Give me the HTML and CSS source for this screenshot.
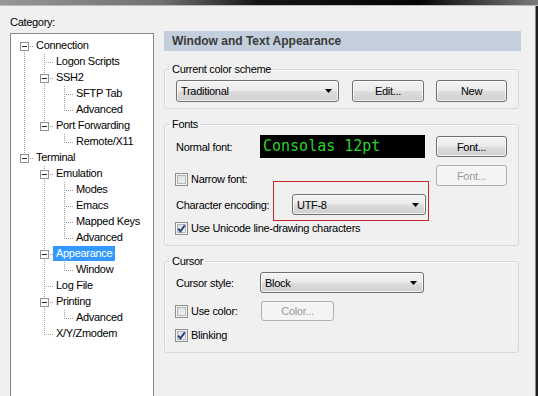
FILE: index.html
```html
<!DOCTYPE html>
<html lang="en">
<head>
    <meta charset="UTF-8">
    <meta name="viewport" content="width=device-width, initial-scale=1.0">
    <title>Session Options</title>
    <link rel="stylesheet" href="styles.css">
</head>
<body>
    <div class="titlebar"></div>
    <div class="dialog">
        <div class="side">
            <div class="caption">Category:</div>
            <div class="tree">
                <div class="row"><span class="cell first"><span class="box"></span></span><span class="name">Connection</span></div>
                <div class="row"><span class="cell pipe"></span><span class="cell tee"></span><span class="name">Logon Scripts</span></div>
                <div class="row"><span class="cell pipe"></span><span class="cell tee"><span class="box"></span></span><span class="name">SSH2</span></div>
                <div class="row"><span class="cell pipe"></span><span class="cell pipe"></span><span class="cell tee"></span><span class="name">SFTP Tab</span></div>
                <div class="row"><span class="cell pipe"></span><span class="cell pipe"></span><span class="cell elbow"></span><span class="name">Advanced</span></div>
                <div class="row"><span class="cell pipe"></span><span class="cell elbow"><span class="box"></span></span><span class="name">Port Forwarding</span></div>
                <div class="row"><span class="cell pipe"></span><span class="cell"></span><span class="cell elbow"></span><span class="name">Remote/X11</span></div>
                <div class="row"><span class="cell elbow"><span class="box"></span></span><span class="name">Terminal</span></div>
                <div class="row"><span class="cell"></span><span class="cell tee"><span class="box"></span></span><span class="name">Emulation</span></div>
                <div class="row"><span class="cell"></span><span class="cell pipe"></span><span class="cell tee"></span><span class="name">Modes</span></div>
                <div class="row"><span class="cell"></span><span class="cell pipe"></span><span class="cell tee"></span><span class="name">Emacs</span></div>
                <div class="row"><span class="cell"></span><span class="cell pipe"></span><span class="cell tee"></span><span class="name">Mapped Keys</span></div>
                <div class="row"><span class="cell"></span><span class="cell pipe"></span><span class="cell elbow"></span><span class="name">Advanced</span></div>
                <div class="row"><span class="cell"></span><span class="cell tee"><span class="box"></span></span><span class="name selected">Appearance</span></div>
                <div class="row"><span class="cell"></span><span class="cell pipe"></span><span class="cell elbow"></span><span class="name">Window</span></div>
                <div class="row"><span class="cell"></span><span class="cell tee"></span><span class="name">Log File</span></div>
                <div class="row"><span class="cell"></span><span class="cell tee"><span class="box"></span></span><span class="name">Printing</span></div>
                <div class="row"><span class="cell"></span><span class="cell pipe"></span><span class="cell elbow"></span><span class="name">Advanced</span></div>
                <div class="row"><span class="cell"></span><span class="cell elbow"></span><span class="name">X/Y/Zmodem</span></div>
            </div>
        </div>

        <div class="page">
            <div class="heading">Window and Text Appearance</div>

            <fieldset class="group scheme-group">
                <legend>Current color scheme</legend>
                <div class="line scheme-line">
                    <div class="combo scheme">
                        <span>Traditional</span>
                        <svg class="arrow" width="7" height="4" viewBox="0 0 7 4"><path d="M0 0h7L3.5 4z"/></svg>
                    </div>
                    <button class="btn edit">Edit...</button>
                    <button class="btn new">New</button>
                </div>
            </fieldset>

            <fieldset class="group fonts-group">
                <legend>Fonts</legend>
                <div class="line normal-line">
                    <span class="label">Normal font:</span>
                    <div class="console">Consolas 12pt</div>
                    <button class="btn side-btn">Font...</button>
                </div>
                <div class="line narrow-line">
                    <label class="check-item low">
                        <span class="check"></span>
                        <span>Narrow font:</span>
                    </label>
                    <button class="btn side-btn" disabled>Font...</button>
                </div>
                <div class="line encoding-line">
                    <span class="label wide-label">Character encoding:</span>
                    <div class="combo encoding marked">
                        <span>UTF-8</span>
                        <svg class="arrow" width="7" height="4" viewBox="0 0 7 4"><path d="M0 0h7L3.5 4z"/></svg>
                    </div>
                </div>
                <div class="line unicode-line">
                    <label class="check-item">
                        <span class="check on"><svg width="11" height="11" viewBox="0 0 11 11"><path d="M2.2 5.6 4.4 8.4 8.8 2.4"/></svg></span>
                        <span>Use Unicode line-drawing characters</span>
                    </label>
                </div>
            </fieldset>

            <fieldset class="group cursor-group">
                <legend>Cursor</legend>
                <div class="line style-line">
                    <span class="label">Cursor style:</span>
                    <div class="combo cursor">
                        <span>Block</span>
                        <svg class="arrow" width="7" height="4" viewBox="0 0 7 4"><path d="M0 0h7L3.5 4z"/></svg>
                    </div>
                </div>
                <div class="line color-line">
                    <label class="check-item wide">
                        <span class="check"></span>
                        <span>Use color:</span>
                    </label>
                    <button class="btn color-btn" disabled>Color...</button>
                </div>
                <div class="line blink-line">
                    <label class="check-item">
                        <span class="check on"><svg width="11" height="11" viewBox="0 0 11 11"><path d="M2.2 5.6 4.4 8.4 8.8 2.4"/></svg></span>
                        <span>Blinking</span>
                    </label>
                </div>
            </fieldset>
        </div>
    </div>
</body>
</html>
```

FILE: styles.css
```css
html, body {
    height: 100%;
}
body {
    margin: 0;
    overflow: hidden;
    background-color: #1e1e1e;
    font-family: "Liberation Sans", Arial, sans-serif;
    font-size: 11px;
    letter-spacing: -0.3px;
    color: #000;
    --dots-v: repeating-linear-gradient(#a0a0a0 0 1px, transparent 1px 2px);
    --dots-h: repeating-linear-gradient(to right, #a0a0a0 0 1px, transparent 1px 2px);
}
.titlebar {
    height: 5px;
    background: linear-gradient(to right, #979797 0%, #707070 30%, #151515 48%, #060606 78%, #7a7a7a 100%);
    border-bottom: 1px solid #bcbcbc;
}
.dialog {
    display: flex;
    height: 390px;
    margin-right: 2px;
    background-color: #f0f0f0;
    border-right: 1px solid #8c8c8c;
}

/* category tree */
.side {
    width: 154px;
    flex: none;
    padding-left: 10px;
    box-sizing: border-box;
}
.caption {
    margin-top: 9px;
    line-height: 14px;
}
.tree {
    width: 144px;
    height: 364px;
    margin-top: 4px;
    padding: 4px 0 0 3px;
    box-sizing: border-box;
    background: #fff;
    border: 1px solid #828790;
}
.row {
    display: flex;
    align-items: flex-start;
    height: 16px;
}
.cell {
    display: block;
    width: 20px;
    height: 16px;
    flex: none;
}
.pipe {
    background: var(--dots-v) 10px 0 / 1px 16px no-repeat;
}
.tee {
    background: var(--dots-h) 12px 8px / 8px 1px no-repeat,
                var(--dots-v) 10px 0 / 1px 16px no-repeat;
}
.elbow {
    background: var(--dots-h) 12px 8px / 8px 1px no-repeat,
                var(--dots-v) 10px 0 / 1px 9px no-repeat;
}
.first {
    background: var(--dots-h) 12px 8px / 8px 1px no-repeat,
                var(--dots-v) 10px 8px / 1px 8px no-repeat;
}
.box {
    display: block;
    width: 9px;
    height: 9px;
    margin: 4px 0 0 6px;
    box-sizing: border-box;
    border: 1px solid #919191;
    background: linear-gradient(#2b2b2b, #2b2b2b) center / 5px 1px no-repeat, #fff;
}
.name {
    padding: 0 2px;
    line-height: 15px;
    white-space: nowrap;
}
.name.selected {
    margin-left: -1px;
    padding: 0 3px;
    background: #3399ff;
    color: #fff;
}

/* right page */
.page {
    width: 357px;
    margin-left: 10px;
    padding-top: 25px;
}
.heading {
    height: 20px;
    line-height: 20px;
    padding-left: 8px;
    background: #c3cfdc;
    color: #3a3a3a;
    font-weight: bold;
    font-size: 12px;
    letter-spacing: 0;
}
.group {
    margin: 8px 2px 0 0;
    padding: 4px 11px 10px;
    min-width: 0;
    border: 1px solid #d5d9dd;
    border-radius: 3px;
    box-shadow: inset 1px 1px 0 #fbfbfb;
}
.group legend {
    margin-left: -6px;
    padding: 0 2px;
    line-height: 14px;
}
.scheme-group {
    margin-top: 11px;
    padding-bottom: 6px;
}
.line {
    display: flex;
    align-items: center;
}
.label {
    width: 84px;
    flex: none;
    line-height: 14px;
}
.wide-label {
    width: 116px;
}

.combo,
.btn {
    box-sizing: border-box;
    border: 1px solid #707070;
    border-radius: 3px;
    background: linear-gradient(#f3f3f3 0%, #ebebeb 48%, #dddddd 52%, #cfcfcf 100%);
    box-shadow: inset 0 0 0 1px rgba(255, 255, 255, 0.7);
    font-family: inherit;
    font-size: 11px;
    letter-spacing: -0.3px;
    color: #000;
}
.combo {
    display: flex;
    align-items: center;
    justify-content: space-between;
    height: 21px;
    padding: 0 6px 0 4px;
}
.arrow {
    display: block;
}
.btn {
    width: 71px;
    height: 21px;
    padding: 0;
    text-align: center;
}
.btn:disabled {
    border-color: #adb2b5;
    background: #f4f4f4;
    box-shadow: none;
    color: #9a9a9a;
}

.scheme {
    width: 163px;
    height: 22px;
}
.edit {
    width: 72px;
    height: 22px;
    margin-left: 13px;
}
.new {
    height: 22px;
    margin-left: 12px;
}

.normal-line {
    height: 23px;
}
.console {
    width: 165px;
    height: 23px;
    padding-left: 3px;
    box-sizing: border-box;
    background: #000;
    color: #2bd12b;
    font-family: "DejaVu Sans Mono", "Liberation Mono", monospace;
    font-size: 15px;
    line-height: 23px;
    letter-spacing: 0;
}
.side-btn {
    margin-left: auto;
}
.narrow-line {
    height: 21px;
    margin-top: 7px;
}
.low {
    align-self: flex-end;
}
.encoding-line {
    height: 21px;
    margin-top: 8px;
}
.encoding {
    width: 134px;
}
.marked {
    position: relative;
}
.marked::after {
    content: "";
    position: absolute;
    left: -20px;
    top: -14px;
    right: -4px;
    bottom: -7px;
    border: 1px solid #c8262b;
}
.unicode-line {
    margin-top: 6px;
}

.check-item {
    display: flex;
    align-items: center;
    gap: 3px;
    margin-left: -1px;
    line-height: 14px;
}
.check-item.wide {
    width: 86px;
    flex: none;
}
.check {
    width: 13px;
    height: 13px;
    flex: none;
    box-sizing: border-box;
    border: 1px solid #8e8f8f;
    background: linear-gradient(135deg, #d3d6da, #fbfbfb);
    box-shadow: inset 0 0 0 1px #f4f4f4, inset 0 0 0 2px #b4b8bd;
}
.check svg {
    display: block;
}
.check path {
    fill: none;
    stroke: #2a3d7d;
    stroke-width: 1.8;
}

.style-line {
    height: 21px;
}
.cursor {
    width: 164px;
}
.color-line {
    height: 20px;
    margin-top: 8px;
}
.color-btn {
    width: 73px;
    height: 20px;
}
.blink-line {
    margin-top: 7px;
}
```
